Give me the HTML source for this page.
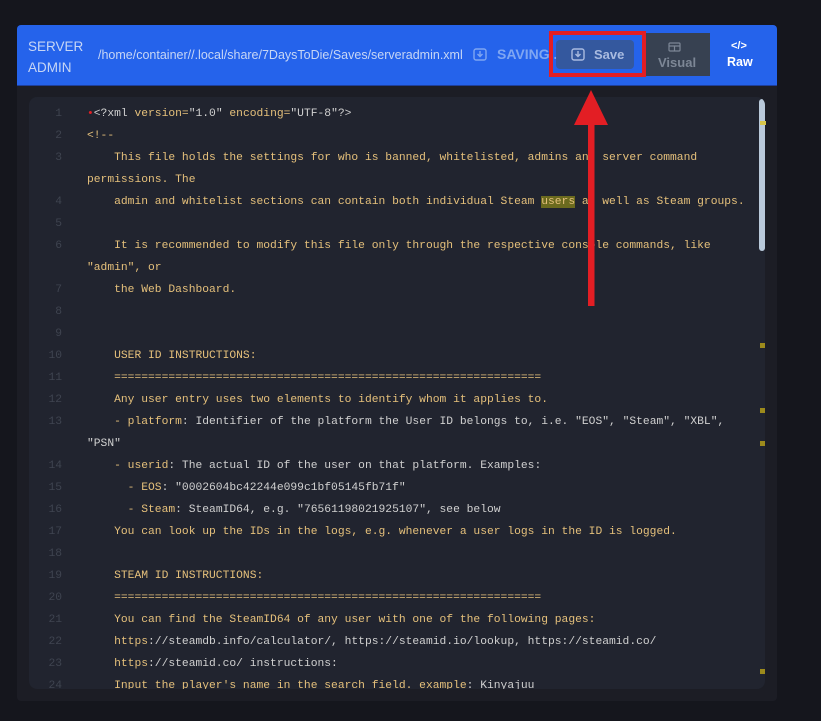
<!DOCTYPE html>
<html><head><meta charset="utf-8"><style>
body{margin:0;width:821px;height:721px;background:#15161d;overflow:hidden;font-family:"Liberation Sans",sans-serif;position:relative}
.card{position:absolute;left:17px;top:25px;width:760px;height:676px;background:#1c1d25;border-radius:4px}
.hdr{position:absolute;left:17px;top:25px;width:760px;height:60px;background:#2563eb;border-radius:4px 4px 0 0;border-bottom:1px solid #1f3f9a}
.t{position:absolute;color:#c7d6f5;font-size:13px}
.ed{position:absolute;left:29px;top:97px;width:736px;height:592px;background:#21242f;border-radius:8px;overflow:hidden}
.code{position:absolute;left:0;top:6px;font-family:"Liberation Mono",monospace;font-size:11.3px;line-height:22px;white-space:pre;color:#e5c07b}
.ln{position:absolute;left:0;width:33px;text-align:right;color:#3f4450}
.tx{position:absolute;left:58px}
.w{color:#d0d0d0}
.mk{position:absolute;left:760px;width:5px;height:5px;background:#9c8a1c}
</style></head><body>
<div class="card"></div>
<div class="hdr"></div>
<div class="t" style="left:28px;top:36px;line-height:21px;font-size:13.5px">SERVER<br>ADMIN</div>
<div class="t" style="left:98px;top:48px;font-size:12.5px">/home/container//.local/share/7DaysToDie/Saves/serveradmin.xml</div>
<svg style="position:absolute;left:473px;top:47px" width="14" height="14" viewBox="0 0 14 14" fill="none" stroke="#7fa6f2" stroke-width="1.4"><rect x="1" y="2" width="12" height="11" rx="2"/><path d="M7 4v5M4.5 7l2.5 2.5L9.5 7"/></svg>
<div class="t" style="left:497px;top:46px;font-size:14px;font-weight:bold;color:#7fa6f2">SAVING...</div>
<div style="position:absolute;left:549px;top:31px;width:89px;height:38px;border:4px solid #e31e24"></div>
<div style="position:absolute;left:556px;top:40px;width:78px;height:29px;background:#34589e;border-radius:4px"></div>
<svg style="position:absolute;left:571px;top:47px" width="14" height="14" viewBox="0 0 14 14" fill="none" stroke="#a9bbe0" stroke-width="1.4"><rect x="1" y="2" width="12" height="11" rx="2"/><path d="M7 4v5M4.5 7l2.5 2.5L9.5 7"/></svg>
<div class="t" style="left:594px;top:47px;font-weight:bold;color:#a9bbe0">Save</div>
<div style="position:absolute;left:646px;top:33px;width:64px;height:43px;background:#374151"></div>
<svg style="position:absolute;left:668px;top:42px" width="13" height="10" viewBox="0 0 13 10" fill="none" stroke="#7d8796" stroke-width="1.2"><rect x="1" y="1" width="11" height="8" rx="1"/><path d="M1 4h11M6.5 4v5"/></svg>
<div class="t" style="left:658px;top:55px;font-weight:bold;color:#7d8796">Visual</div>
<div class="t" style="left:731px;top:40px;font-weight:bold;color:#fff;font-size:11px">&lt;/&gt;</div>
<div class="t" style="left:727px;top:55px;font-weight:bold;color:#fff;font-size:12.5px">Raw</div>
<div class="ed">
<div class="code">
<div class="ln" style="top:0">1</div><div class="tx" style="top:0"><span style="color:#e31e24">•</span><span class="w">&lt;?xml</span> version=<span class="w">"1.0"</span> encoding=<span class="w">"UTF-8"</span><span class="w">?&gt;</span></div>
<div class="ln" style="top:22px">2</div><div class="tx" style="top:22px">&lt;!--</div>
<div class="ln" style="top:44px">3</div><div class="tx" style="top:44px">    This file holds the settings for who is banned, whitelisted, admins and server command
permissions. The</div>
<div class="ln" style="top:88px">4</div><div class="tx" style="top:88px">    admin and whitelist sections can contain both individual Steam <span style="background:#6b6a1e">users</span> as well as Steam groups.</div>
<div class="ln" style="top:110px">5</div>
<div class="ln" style="top:132px">6</div><div class="tx" style="top:132px">    It is recommended to modify this file only through the respective console commands, like
"admin", or</div>
<div class="ln" style="top:176px">7</div><div class="tx" style="top:176px">    the Web Dashboard.</div>
<div class="ln" style="top:198px">8</div>
<div class="ln" style="top:220px">9</div>
<div class="ln" style="top:242px">10</div><div class="tx" style="top:242px">    USER ID INSTRUCTIONS:</div>
<div class="ln" style="top:264px">11</div><div class="tx" style="top:264px">    ===============================================================</div>
<div class="ln" style="top:286px">12</div><div class="tx" style="top:286px">    Any user entry uses two elements to identify whom it applies to.</div>
<div class="ln" style="top:308px">13</div><div class="tx" style="top:308px">    - platform<span class="w">: Identifier of the platform the User ID belongs to, i.e. "EOS", "Steam", "XBL",
"PSN"</span></div>
<div class="ln" style="top:352px">14</div><div class="tx" style="top:352px">    - userid<span class="w">: The actual ID of the user on that platform. Examples:</span></div>
<div class="ln" style="top:374px">15</div><div class="tx" style="top:374px">      - EOS<span class="w">: "0002604bc42244e099c1bf05145fb71f"</span></div>
<div class="ln" style="top:396px">16</div><div class="tx" style="top:396px">      - Steam<span class="w">: SteamID64, e.g. "76561198021925107", see below</span></div>
<div class="ln" style="top:418px">17</div><div class="tx" style="top:418px">    You can look up the IDs in the logs, e.g. whenever a user logs in the ID is logged.</div>
<div class="ln" style="top:440px">18</div>
<div class="ln" style="top:462px">19</div><div class="tx" style="top:462px">    STEAM ID INSTRUCTIONS:</div>
<div class="ln" style="top:484px">20</div><div class="tx" style="top:484px">    ===============================================================</div>
<div class="ln" style="top:506px">21</div><div class="tx" style="top:506px">    You can find the SteamID64 of any user with one of the following pages:</div>
<div class="ln" style="top:528px">22</div><div class="tx" style="top:528px">    https<span class="w">://steamdb.info/calculator/, https://steamid.io/lookup, https://steamid.co/</span></div>
<div class="ln" style="top:550px">23</div><div class="tx" style="top:550px">    https<span class="w">://steamid.co/ instructions:</span></div>
<div class="ln" style="top:572px">24</div><div class="tx" style="top:572px">    Input the player's name in the search field. example<span class="w">: Kinyajuu</span></div>
</div>
<div style="position:absolute;left:730px;top:2px;width:6px;height:152px;background:#b9c9da;border-radius:3px"></div>
</div>
<div class="mk" style="top:121px;background:#d8c54a;height:4px;width:6px"></div>
<div class="mk" style="top:343px"></div>
<div class="mk" style="top:408px"></div>
<div class="mk" style="top:441px"></div>
<div class="mk" style="top:669px"></div>
<svg style="position:absolute;left:570px;top:88px" width="42" height="222" viewBox="0 0 42 222"><path d="M21 2L4 37H38Z" fill="#e31e24"/><rect x="18" y="34" width="6.5" height="184" fill="#e31e24"/></svg>
</body></html>
